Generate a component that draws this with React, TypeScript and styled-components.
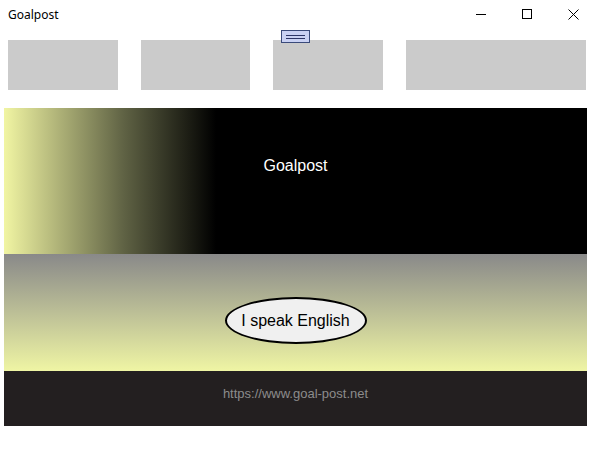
import React from 'react';
import styled, { createGlobalStyle } from 'styled-components';

const GlobalStyle = createGlobalStyle`
  html, body {
    margin: 0;
    padding: 0;
    background: #ffffff;
  }
  body {
    font-family: 'Liberation Sans', Arial, sans-serif;
  }
`;

const Window = styled.div`
  width: 596px;
  height: 461px;
  display: flex;
  flex-direction: column;
  background: #ffffff;
`;

const TitleBar = styled.div`
  height: 28px;
  display: flex;
  align-items: center;
  justify-content: space-between;
  padding-left: 8px;
`;

const TitleText = styled.span`
  font-family: 'Noto Sans', 'Open Sans', sans-serif;
  font-size: 12px;
  color: #000;
`;

const Controls = styled.div`
  display: flex;
  height: 100%;
`;

const ControlButton = styled.div`
  width: 46px;
  height: 100%;
  display: flex;
  align-items: center;
  justify-content: center;
`;

const Toolbar = styled.div`
  display: flex;
  gap: 23px;
  padding: 12px 0 0 8px;
  height: 50px;
`;

const Slot = styled.div<{ $w: number }>`
  position: relative;
  width: ${(p) => p.$w}px;
  height: 50px;
  background: #cbcbcb;
`;

const Handle = styled.div`
  position: absolute;
  left: 8px;
  top: -10px;
  width: 27px;
  height: 11px;
  background: #c9d1f3;
  border: 1px solid #3a4a7a;
  display: flex;
  flex-direction: column;
  justify-content: center;
  align-items: center;
  gap: 2px;
`;

const HandleLine = styled.div`
  width: 19px;
  height: 1px;
  background: #2c3566;
`;

const Content = styled.div`
  margin: 18px 0 0 4px;
  width: 583px;
  display: flex;
  flex-direction: column;
`;

const Hero = styled.div`
  height: 146px;
  background: linear-gradient(to right, #f1f5a3 0px, #5f6244 120px, #000000 212px);
  display: flex;
  justify-content: center;
  padding-top: 49px;
  box-sizing: border-box;
`;

const HeroTitle = styled.span`
  color: #ffffff;
  font-size: 16px;
  line-height: 18px;
`;

const Band = styled.div`
  height: 117px;
  background: linear-gradient(to bottom, #898989, #eff5a4);
  display: flex;
  justify-content: center;
  align-items: flex-start;
  padding-top: 43px;
  box-sizing: border-box;
`;

const LangButton = styled.button`
  width: 142px;
  height: 47px;
  border: 2px solid #000;
  border-radius: 50%;
  background: #f0f0f0;
  font-family: 'Liberation Sans', Arial, sans-serif;
  font-size: 16px;
  color: #000;
  padding: 0;
  box-sizing: border-box;
`;

const Footer = styled.div`
  height: 55px;
  background: #231f20;
  display: flex;
  justify-content: center;
  padding-top: 15px;
  box-sizing: border-box;
`;

const FooterLink = styled.span`
  color: #8c8c8c;
  font-size: 13px;
  line-height: 15px;
`;

const App: React.FC = () => {
  return (
    <>
      <GlobalStyle />
      <Window>
        <TitleBar>
          <TitleText>Goalpost</TitleText>
          <Controls>
            <ControlButton>
              <svg width="10" height="10" viewBox="0 0 10 10">
                <line x1="0" y1="5.5" x2="10" y2="5.5" stroke="#000" strokeWidth="1" />
              </svg>
            </ControlButton>
            <ControlButton>
              <svg width="10" height="10" viewBox="0 0 10 10">
                <rect x="0.5" y="0.5" width="9" height="9" fill="none" stroke="#000" strokeWidth="1" />
              </svg>
            </ControlButton>
            <ControlButton>
              <svg width="11" height="11" viewBox="0 0 11 11">
                <path d="M0.5 0.5 L10.5 10.5 M10.5 0.5 L0.5 10.5" stroke="#000" strokeWidth="1" />
              </svg>
            </ControlButton>
          </Controls>
        </TitleBar>
        <Toolbar>
          <Slot $w={110} />
          <Slot $w={109} />
          <Slot $w={110}>
            <Handle>
              <HandleLine />
              <HandleLine />
            </Handle>
          </Slot>
          <Slot $w={180} />
        </Toolbar>
        <Content>
          <Hero>
            <HeroTitle>Goalpost</HeroTitle>
          </Hero>
          <Band>
            <LangButton>I speak English</LangButton>
          </Band>
          <Footer>
            <FooterLink>https://www.goal-post.net</FooterLink>
          </Footer>
        </Content>
      </Window>
    </>
  );
};

export default App;
